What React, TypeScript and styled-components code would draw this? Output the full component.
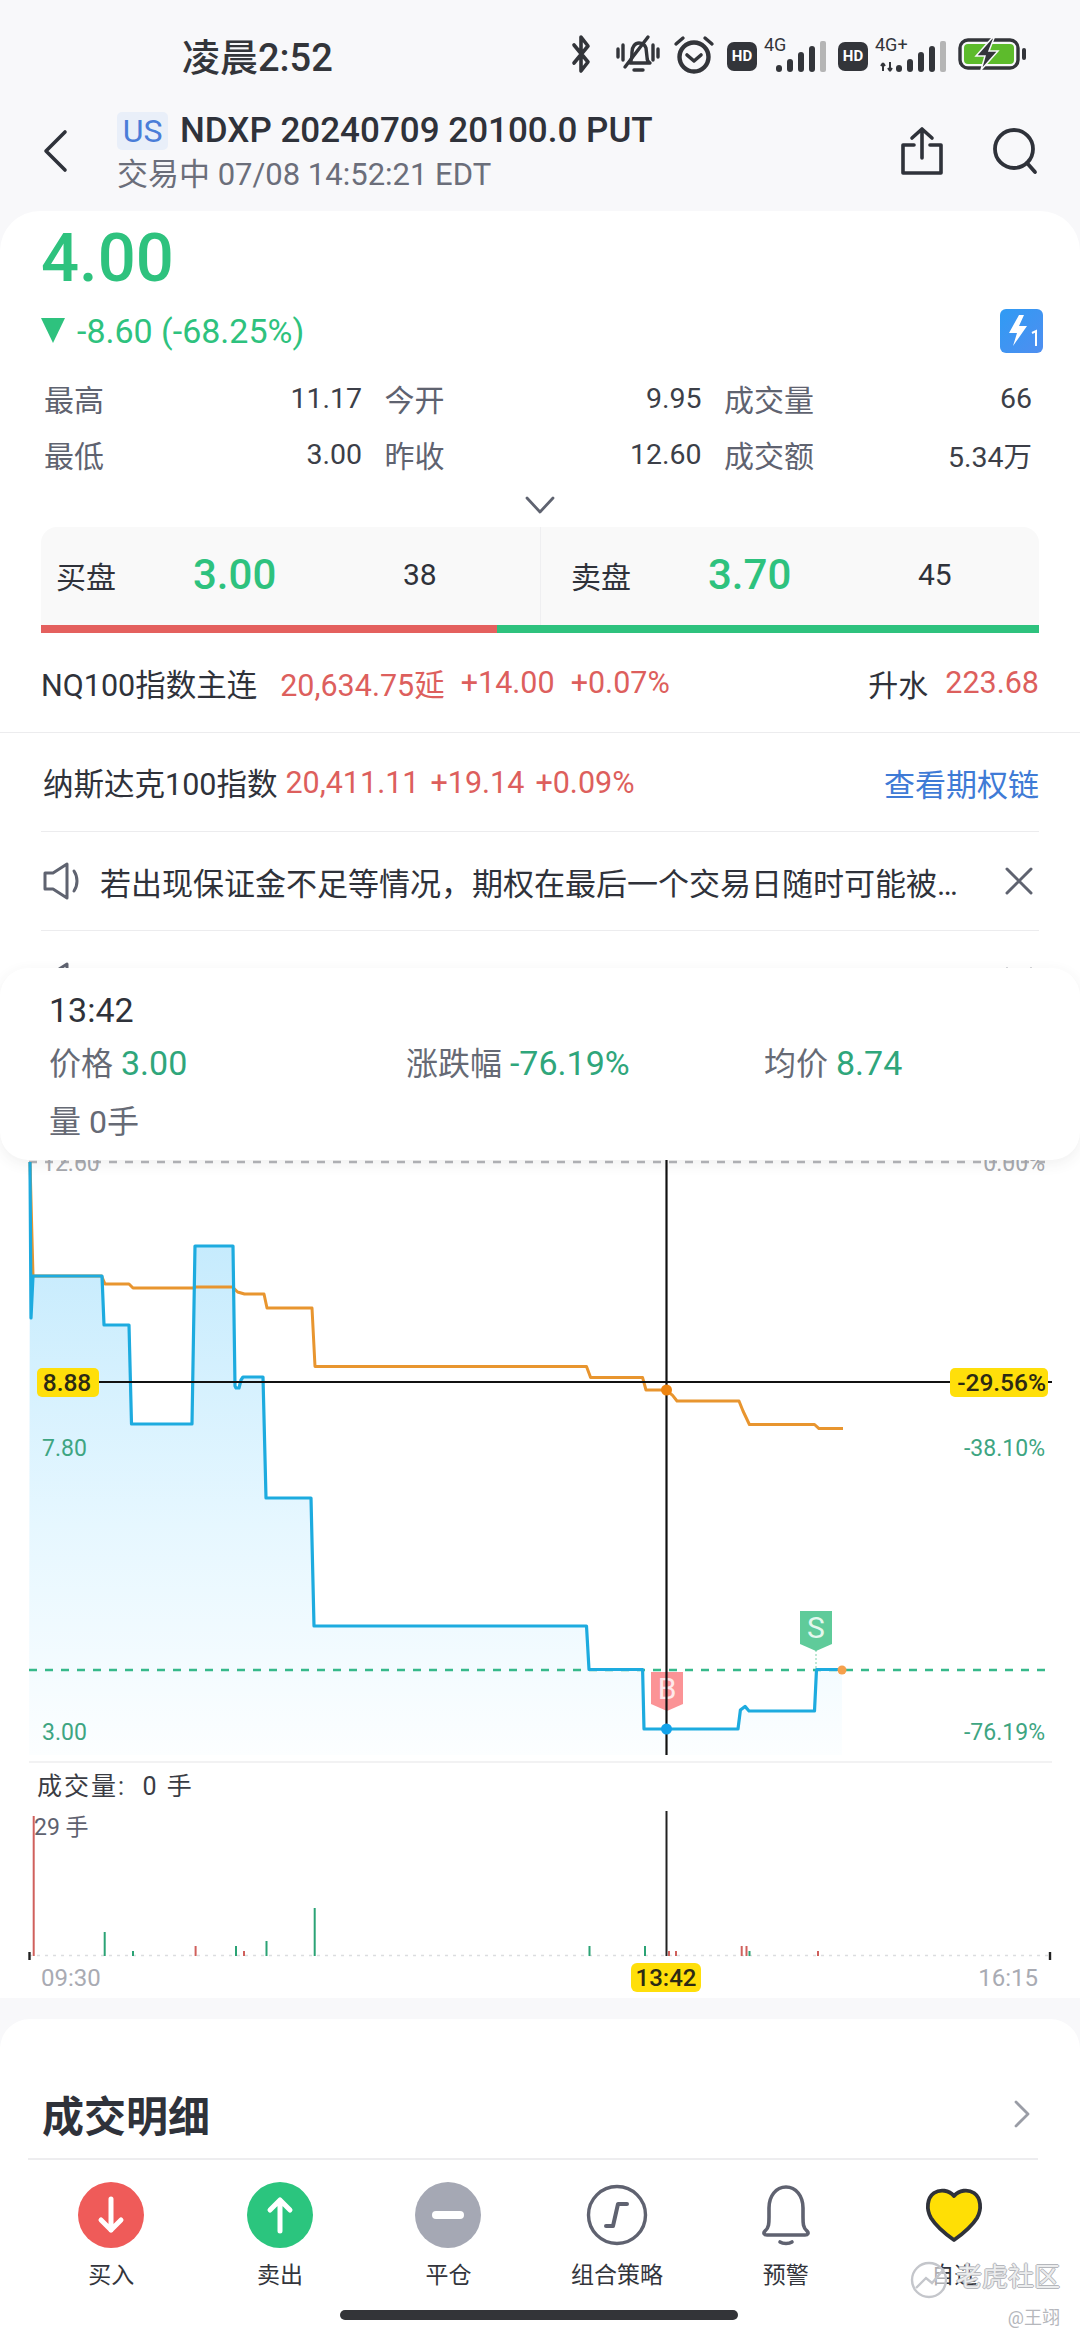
import styled, { createGlobalStyle } from 'styled-components';

const GREEN = '#2ec27e';
const RED = '#e4605e';
const INK = '#2f323a';
const GREY = '#5f6370';

const BLUE_LINE: [number, number][] = [
  [30, 1162], [31, 1318], [33, 1276], [102, 1276], [104, 1325], [129, 1325], [131.5, 1424], [192, 1424],
  [195, 1246], [233, 1246], [235, 1386], [236, 1388], [239, 1388], [241, 1380], [243, 1377], [263, 1377],
  [266, 1498], [311, 1498], [314, 1626], [586.5, 1626], [589, 1669.5], [642.6, 1669.5], [644, 1729], [738, 1729],
  [740.4, 1710], [745, 1706.4], [749, 1711], [814.5, 1711], [816.5, 1669.5], [842, 1669.5],
];

const ORANGE_LINE: [number, number][] = [
  [30, 1162], [33, 1276], [101.6, 1276], [105, 1284], [129, 1284], [133, 1288], [193, 1288], [196, 1287],
  [232.5, 1287], [237.6, 1292], [244.5, 1294], [264, 1294], [267, 1308], [312, 1308], [315, 1366.5],
  [586.5, 1366.5], [590.6, 1377.6], [642.6, 1377.6], [646, 1390], [666, 1390], [672.6, 1395.4], [677, 1401],
  [739, 1401], [743, 1411], [749.4, 1424.5], [814.5, 1424.5], [819, 1428.6], [843, 1428.6],
];

const VOLUME_BARS: { x: number; top: number; up?: boolean }[] = [
  { x: 33.7, top: 1816, up: true },
  { x: 104.7, top: 1932 },
  { x: 133, top: 1951 },
  { x: 195.6, top: 1946, up: true },
  { x: 236, top: 1946 },
  { x: 244, top: 1951, up: true },
  { x: 266.5, top: 1941 },
  { x: 314.7, top: 1908 },
  { x: 589.5, top: 1946 },
  { x: 645, top: 1946 },
  { x: 669, top: 1951, up: true },
  { x: 676, top: 1951, up: true },
  { x: 741.7, top: 1946, up: true },
  { x: 746.5, top: 1946, up: true },
  { x: 749.5, top: 1951 },
  { x: 818, top: 1951, up: true },
];

const toPoints = (line: [number, number][]) => line.map(([x, y]) => `${x},${y}`).join(' ');

const GlobalStyle = createGlobalStyle`
  html, body {
    margin: 0;
    padding: 0;
    background: #f8f8fa;
  }
  body {
    font-family: Roboto, "Noto Sans CJK SC", sans-serif;
    color: ${INK};
  }
  * {
    box-sizing: border-box;
  }
`;

const BellOffIcon = () => (
  <svg width="46" height="40" viewBox="0 0 46 40" fill="none" stroke="#33353a" strokeWidth="3.4" strokeLinecap="round" strokeLinejoin="round">
    <path d="M15 29c2-3 2-6 2-11 0-5 3-9 7-9s6 2 7 5l1 9c0 3 1 5 3 6z" />
    <path d="M10 33 33 3" />
    <path d="M3 15v8M8 11v15M38 11v15M43 15v8" />
    <path d="M19 36h9" />
  </svg>
);

const SignalIcon = ({ small }: { small?: boolean }) => (
  <svg width={small ? 66 : 50} height="32" viewBox={small ? '0 0 66 32' : '0 0 50 32'}>
    {small && <path d="M3 24v6M3 22l-2 3M3 22l2 3M10 21v9M10 30l-2-3M10 30l2-3" stroke="#33353a" strokeWidth="2" fill="none" />}
    <g fill="#33353a" transform={small ? 'translate(16 0)' : undefined}>
      <rect x="0" y="24" width="6" height="7" rx="3" />
      <rect x="11" y="18" width="6" height="13" rx="3" />
      <rect x="22" y="11" width="6" height="20" rx="3" />
      <rect x="33" y="5" width="6" height="26" rx="3" />
      <rect x="44" y="0" width="6" height="31" rx="2" fill="#b5b5b5" />
    </g>
  </svg>
);

const SpeakerIcon = () => (
  <svg width="38" height="38" viewBox="0 0 38 38" fill="none" stroke={GREY} strokeWidth="3" strokeLinejoin="round" strokeLinecap="round">
    <path d="M2 11h8L24 2v34l-14-9H2z" />
    <path d="M31 9c4 6 4 14 0 20" />
  </svg>
);

const CloseIcon = () => (
  <CloseWrap>
    <svg width="28" height="28" viewBox="0 0 28 28" fill="none" stroke={GREY} strokeWidth="3" strokeLinecap="round">
      <path d="M2 2l24 24M26 2 2 26" />
    </svg>
  </CloseWrap>
);

const App = () => (
  <>
    <GlobalStyle />
    <Page>
      <StatusBar>
        <Clock>凌晨2:52</Clock>
        <StatusIcons>
          <svg width="20" height="40" viewBox="0 0 18 40" fill="none" stroke="#33353a" strokeWidth="3.6" strokeLinejoin="round" strokeLinecap="round">
            <path d="M2 11 16 28 9 37V3l7 9L2 29" />
          </svg>
          <BellSlot>
            <BellOffIcon />
          </BellSlot>
          <svg width="42" height="40" viewBox="0 0 42 40" fill="none" stroke="#33353a" strokeLinecap="round" strokeLinejoin="round">
            <circle cx="21" cy="23" r="14.5" strokeWidth="4.4" />
            <path d="M14 21l7 6 7-6" strokeWidth="3.6" />
            <path d="M3 10 10 4M39 10l-7-6" strokeWidth="3.4" />
          </svg>
          <HdBadge>HD</HdBadge>
          <NetworkBlock $pad={12}>
            <NetworkLabel>4G</NetworkLabel>
            <SignalIcon />
          </NetworkBlock>
          <HdBadge>HD</HdBadge>
          <NetworkBlock $pad={5}>
            <NetworkLabel>4G+</NetworkLabel>
            <SignalIcon small />
          </NetworkBlock>
          <svg width="70" height="32" viewBox="0 0 70 32">
            <rect x="2" y="2" width="58" height="28" rx="8" fill="none" stroke="#33353a" strokeWidth="3.4" />
            <rect x="6" y="6" width="50" height="20" rx="4" fill="#5dbb2c" />
            <rect x="64" y="10" width="4" height="12" rx="2" fill="#33353a" />
            <path d="M34 0 18 18h9l-4 14 17-19h-9l5-13z" fill="#33353a" stroke="#f8f8fa" strokeWidth="1.5" />
          </svg>
        </StatusIcons>
      </StatusBar>

      <NavBar>
        <svg width="26" height="44" viewBox="0 0 26 44" fill="none" stroke={INK} strokeWidth="3.6" strokeLinecap="round" strokeLinejoin="round">
          <path d="M23 3 4 22l19 19" />
        </svg>
        <NavTitleBlock>
          <NavTitle>
            <MarketBadge>US</MarketBadge>
            NDXP 20240709 20100.0 PUT
          </NavTitle>
          <NavSub>交易中 07/08 14:52:21 EDT</NavSub>
        </NavTitleBlock>
        <NavActions>
          <svg width="44" height="50" viewBox="0 0 44 50" fill="none" stroke={INK} strokeWidth="3.6" strokeLinecap="round" strokeLinejoin="round">
            <path d="M14 19H3v28h38V19H30" />
            <path d="M22 32V3M12 12l10-9 10 9" />
          </svg>
          <svg width="48" height="48" viewBox="0 0 48 48" fill="none" stroke={INK} strokeWidth="3.8" strokeLinecap="round">
            <circle cx="23" cy="22" r="19" />
            <path d="M36 36l8 9" />
          </svg>
        </NavActions>
      </NavBar>

      <QuoteCard>
        <Price>4.00</Price>
        <ChangeRow>
          <DownTriangle />
          <span>-8.60 (-68.25%)</span>
          <BoltBadge>
            <svg width="43" height="44" viewBox="0 0 43 44">
              <path d="M19 6 9 24h8l-4 13 14-20h-8l5-11z" fill="#fff" />
              <path d="M32 24l4-2v15" fill="none" stroke="#fff" strokeWidth="2" />
            </svg>
          </BoltBadge>
        </ChangeRow>

        <StatsGrid>
          <Stat><StatLabel>最高</StatLabel><span>11.17</span></Stat>
          <Stat><StatLabel>今开</StatLabel><span>9.95</span></Stat>
          <Stat><StatLabel>成交量</StatLabel><span>66</span></Stat>
          <Stat><StatLabel>最低</StatLabel><span>3.00</span></Stat>
          <Stat><StatLabel>昨收</StatLabel><span>12.60</span></Stat>
          <Stat><StatLabel>成交额</StatLabel><span>5.34万</span></Stat>
        </StatsGrid>

        <ExpandRow>
          <svg width="30" height="18" viewBox="0 0 30 18" fill="none" stroke={GREY} strokeWidth="2.8" strokeLinecap="round" strokeLinejoin="round">
            <path d="M2 2l13 14L28 2" />
          </svg>
        </ExpandRow>

        <BidAsk>
          <BidAskSides>
            <BidAskSide $pad={15}>
              <span>买盘</span>
              <BidPrice>3.00</BidPrice>
              <span>38</span>
            </BidAskSide>
            <BidAskSide $pad={30} $divided>
              <span>卖盘</span>
              <BidPrice>3.70</BidPrice>
              <span>45</span>
            </BidAskSide>
          </BidAskSides>
          <RatioBar>
            <RatioPart $color={RED} $size={456} />
            <RatioPart $color={GREEN} $size={542} />
          </RatioBar>
        </BidAsk>

        <FutureRow>
          <span>NQ100指数主连</span>
          <RedText $left={23}>20,634.75延</RedText>
          <RedText $left={16}>+14.00</RedText>
          <RedText $left={16}>+0.07%</RedText>
          <PushRight>升水</PushRight>
          <RedText $left={17}>223.68</RedText>
        </FutureRow>
      </QuoteCard>

      <IndexBlock>
        <IndexRow>
          <span>纳斯达克100指数</span>
          <RedText $left={8}>20,411.11</RedText>
          <RedText $left={11}>+19.14</RedText>
          <RedText $left={11}>+0.09%</RedText>
          <LinkText>查看期权链</LinkText>
        </IndexRow>
        <NoticeRow>
          <SpeakerIcon />
          <NoticeText>若出现保证金不足等情况，期权在最后一个交易日随时可能被强制平仓处理</NoticeText>
          <CloseIcon />
        </NoticeRow>
        <NoticeRow $last>
          <SpeakerIcon />
          <NoticeText>注意，根据交易所规定，NDXP 到期时将报单，价外作废，若持仓不足请留意</NoticeText>
          <CloseIcon />
        </NoticeRow>
      </IndexBlock>

      <ChartSection>
        <Tooltip>
          <TooltipTime>13:42</TooltipTime>
          <TooltipRow>
            <TooltipCell $width={357}>价格 <em>3.00</em></TooltipCell>
            <TooltipCell $width={358}>涨跌幅 <em>-76.19%</em></TooltipCell>
            <TooltipCell>均价 <em>8.74</em></TooltipCell>
          </TooltipRow>
          <TooltipCell>量 0手</TooltipCell>
        </Tooltip>

        <ChartSvg width="1080" height="967" viewBox="0 1031 1080 967">
          <defs>
            <linearGradient id="area" gradientUnits="userSpaceOnUse" x1="0" y1="1246" x2="0" y2="1755">
              <stop offset="0" stopColor="#c6ebfd" />
              <stop offset="0.55" stopColor="#e6f7ff" />
              <stop offset="1" stopColor="#fcfeff" />
            </linearGradient>
          </defs>

          <polygon points={`29,1755 ${toPoints(BLUE_LINE)} 842,1755`} fill="url(#area)" />
          <line x1="29" y1="1162" x2="1045" y2="1162" stroke="#b4b5b9" strokeWidth="2.4" strokeDasharray="8 8" />
          <line x1="29" y1="1670" x2="1045" y2="1670" stroke="#36b98a" strokeWidth="2.4" strokeDasharray="8 8" />

          <AxisText x="42" y="1171" fill="#a6a8ae">12.60</AxisText>
          <AxisText x="1045" y="1171" fill="#a6a8ae" textAnchor="end">0.00%</AxisText>
          <AxisText x="42" y="1456" fill="#3ea582">7.80</AxisText>
          <AxisText x="1045" y="1456" fill="#3ea582" textAnchor="end">-38.10%</AxisText>
          <AxisText x="42" y="1740" fill="#3ea582">3.00</AxisText>
          <AxisText x="1045" y="1740" fill="#3ea582" textAnchor="end">-76.19%</AxisText>

          <polyline points={toPoints(ORANGE_LINE)} fill="none" stroke="#e8952f" strokeWidth="3" strokeLinejoin="round" />
          <polyline points={toPoints(BLUE_LINE)} fill="none" stroke="#1dabdf" strokeWidth="3.2" strokeLinejoin="round" />

          <path d="M651 1672h32v32l-16 7-16-7z" fill="#fb9396" />
          <MarkerText x="667" y="1699" fill="#ffe9ea">B</MarkerText>
          <line x1="816" y1="1650" x2="816" y2="1668" stroke="#bfe8d5" strokeWidth="2" strokeDasharray="2 2" />
          <path d="M800 1611h32v33l-16 7-16-7z" fill="#5fcb9a" />
          <MarkerText x="816" y="1638" fill="#e4f8ee">S</MarkerText>

          <line x1="99" y1="1382" x2="1052" y2="1382" stroke="#111" strokeWidth="2.2" />
          <line x1="666.5" y1="1160" x2="666.5" y2="1755" stroke="#111" strokeWidth="2.2" />
          <circle cx="666.5" cy="1390" r="5.5" fill="#ee8410" />
          <circle cx="666.5" cy="1729" r="5.5" fill="#13a3ea" />
          <circle cx="842" cy="1670" r="4.5" fill="#f5a04c" />

          <rect x="37" y="1368" width="62" height="29" rx="5" fill="#ffdf0a" />
          <PriceTag x="67" y="1391" textAnchor="middle">8.88</PriceTag>
          <rect x="950" y="1368" width="98" height="29" rx="5" fill="#ffdf0a" />
          <PriceTag x="1046" y="1391" textAnchor="end">-29.56%</PriceTag>

          <line x1="29" y1="1762" x2="1052" y2="1762" stroke="#eeeeef" strokeWidth="1.5" />
          <VolumeTitle x="37" y="1795" xmlSpace="preserve">成交量:  0 手</VolumeTitle>

          <line x1="29" y1="1955.5" x2="1050" y2="1955.5" stroke="#dcdde0" strokeWidth="1.4" strokeDasharray="3 5" />
          {VOLUME_BARS.map(({ x, top, up }) => (
            <line key={x} x1={x} y1={top} x2={x} y2="1956" stroke={up ? '#d0605c' : '#2ba375'} strokeWidth="2" />
          ))}
          <line x1="666.5" y1="1811" x2="666.5" y2="1956" stroke="#222" strokeWidth="2" />
          <line x1="29.5" y1="1952" x2="29.5" y2="1960" stroke="#222" strokeWidth="2.4" />
          <line x1="1050" y1="1952" x2="1050" y2="1960" stroke="#222" strokeWidth="2.4" />
          <VolumeScale x="34" y="1835">29 手</VolumeScale>

          <TimeText x="41" y="1986">09:30</TimeText>
          <TimeText x="1038" y="1986" textAnchor="end">16:15</TimeText>
          <rect x="631" y="1963" width="70" height="29" rx="6" fill="#ffdf0a" />
          <TimeTag x="666" y="1986" textAnchor="middle">13:42</TimeTag>
        </ChartSvg>
      </ChartSection>

      <DetailCard>
        <DetailTitle>成交明细</DetailTitle>
        <svg width="16" height="28" viewBox="0 0 16 28" fill="none" stroke="#9a9da6" strokeWidth="2.8" strokeLinecap="round" strokeLinejoin="round">
          <path d="M2 2l12 12L2 26" />
        </svg>
      </DetailCard>

      <TabBar>
        <Tab>
          <RoundIcon $color="#ef5b59">
            <svg width="28" height="38" viewBox="0 0 28 38" fill="none" stroke="#fff" strokeWidth="5" strokeLinecap="round" strokeLinejoin="round">
              <path d="M14 3v31M4 24l10 10 10-10" />
            </svg>
          </RoundIcon>
          <TabLabel>买入</TabLabel>
        </Tab>
        <Tab>
          <RoundIcon $color="#2bc57e">
            <svg width="28" height="38" viewBox="0 0 28 38" fill="none" stroke="#fff" strokeWidth="5" strokeLinecap="round" strokeLinejoin="round">
              <path d="M14 35V4M4 14 14 4l10 10" />
            </svg>
          </RoundIcon>
          <TabLabel>卖出</TabLabel>
        </Tab>
        <Tab>
          <RoundIcon $color="#a5a8b4">
            <svg width="32" height="10" viewBox="0 0 32 10">
              <rect width="32" height="8" y="1" rx="4" fill="#fff" />
            </svg>
          </RoundIcon>
          <TabLabel>平仓</TabLabel>
        </Tab>
        <Tab>
          <IconSlot>
            <svg width="62" height="62" viewBox="0 0 62 62" fill="none" stroke="#5f6270" strokeLinecap="round" strokeLinejoin="round">
              <circle cx="31" cy="31" r="28.5" strokeWidth="3.4" />
              <path d="M20 42h7l5-22h9" strokeWidth="4" />
            </svg>
          </IconSlot>
          <TabLabel>组合策略</TabLabel>
        </Tab>
        <Tab>
          <IconSlot>
            <svg width="54" height="62" viewBox="0 0 54 62" fill="none" stroke="#5f6270" strokeWidth="3.6" strokeLinecap="round" strokeLinejoin="round">
              <path d="M6 47c4-3 4-8 4-14V24C10 12 17 3 27 3s17 9 17 21v9c0 6 0 11 4 14 2 2 1 4-2 4H8c-3 0-4-2-2-4z" />
              <path d="M21 58c3 2 9 2 12 0" />
            </svg>
          </IconSlot>
          <TabLabel>预警</TabLabel>
        </Tab>
        <Tab>
          <IconSlot>
            <svg width="60" height="56" viewBox="0 0 60 56">
              <path d="M30 9C25 3 16 2 10 6 3 11 2 22 7 31c5 8 13 15 23 22 10-7 18-14 23-22 5-9 4-20-3-25-6-4-15-3-20 3z" fill="#ffdf05" stroke="#2f323a" strokeWidth="3.8" strokeLinejoin="round" />
            </svg>
          </IconSlot>
          <TabLabel>自选</TabLabel>
        </Tab>
        <HomeBar />
        <Watermark>
          <WatermarkMain>
            <svg width="46" height="46" viewBox="0 0 46 46" fill="none" stroke="#c4c6cb" strokeWidth="2.4">
              <circle cx="21" cy="26" r="17" fill="rgba(255,255,255,.6)" />
              <path d="M8 34 18 24l6 5 12-14" />
            </svg>
            <WatermarkText>老虎社区</WatermarkText>
          </WatermarkMain>
          <WatermarkUser>@王翊</WatermarkUser>
        </Watermark>
      </TabBar>
    </Page>
  </>
);

const Page = styled.div`
  position: relative;
  width: 1080px;
  height: 2340px;
  overflow: hidden;
  display: flex;
  flex-direction: column;
  background: #f8f8fa;
`;

const StatusBar = styled.div`
  height: 90px;
  padding: 18px 52px 0 182px;
  display: flex;
  align-items: center;
  justify-content: space-between;
`;

const Clock = styled.span`
  font-size: 38px;
  font-weight: 500;
  color: #33353a;
`;

const StatusIcons = styled.div`
  display: flex;
  align-items: center;
  gap: 12px;
`;

const BellSlot = styled.span`
  display: flex;
  margin-left: 12px;
`;

const HdBadge = styled.span`
  width: 30px;
  height: 29px;
  margin-right: -5px;
  border-radius: 7px;
  background: #33353a;
  color: #fff;
  font-size: 15px;
  font-weight: 700;
  display: flex;
  align-items: center;
  justify-content: center;
  margin-top: 4px;
`;

const NetworkBlock = styled.div<{ $pad: number }>`
  position: relative;
  display: flex;
  align-items: flex-end;
  height: 38px;
  padding-left: ${(p) => p.$pad}px;
`;

const NetworkLabel = styled.span`
  position: absolute;
  left: 0;
  top: -1px;
  font-size: 18px;
  color: #33353a;
`;

const NavBar = styled.div`
  height: 121px;
  padding: 0 41px 0 42px;
  display: flex;
  align-items: center;
`;

const NavTitleBlock = styled.div`
  margin-left: 49px;
  margin-top: 4px;
  display: flex;
  flex-direction: column;
  gap: 7px;
`;

const NavTitle = styled.div`
  display: flex;
  align-items: center;
  font-size: 35px;
  font-weight: 500;
  line-height: 38px;
`;

const MarketBadge = styled.span`
  width: 51px;
  height: 38px;
  margin-right: 12px;
  border-radius: 5px;
  background: #e9eff9;
  color: #4a7dd8;
  font-size: 32px;
  font-weight: 400;
  text-align: center;
`;

const NavSub = styled.div`
  font-size: 31px;
  line-height: 36px;
  color: #6b6e7a;
`;

const NavActions = styled.div`
  margin-left: auto;
  display: flex;
  align-items: center;
  gap: 47px;
`;

const QuoteCard = styled.div`
  padding: 7px 41px 0;
  background: #fff;
  border-radius: 40px 40px 0 0;
`;

const Price = styled.div`
  font-size: 67px;
  line-height: 80px;
  font-weight: 500;
  color: ${GREEN};
`;

const ChangeRow = styled.div`
  height: 65px;
  display: flex;
  align-items: center;
  gap: 12px;
  font-size: 34px;
  color: ${GREEN};
`;

const DownTriangle = styled.span`
  width: 0;
  height: 0;
  border-left: 12px solid transparent;
  border-right: 12px solid transparent;
  border-top: 25px solid ${GREEN};
`;

const BoltBadge = styled.span`
  margin-left: auto;
  margin-right: -4px;
  width: 43px;
  height: 44px;
  display: flex;
  border-radius: 6px;
  background: linear-gradient(135deg, #2f9bf4, #4f8ef0);
`;

const StatsGrid = styled.div`
  margin: 7px 7px 0 3px;
  display: grid;
  grid-template-columns: 318px 317px 308px;
  column-gap: 22.5px;
  grid-auto-rows: 56px;
  font-size: 28.5px;
  color: #3c3f48;
`;

const Stat = styled.div`
  display: flex;
  align-items: center;
  justify-content: space-between;
`;

const StatLabel = styled.span`
  font-size: 30px;
  color: ${GREY};
`;

const ExpandRow = styled.div`
  height: 45px;
  display: flex;
  align-items: center;
  justify-content: center;
`;

const BidAsk = styled.div`
  height: 106px;
  display: flex;
  flex-direction: column;
  border-radius: 16px 16px 0 0;
  background: #f9f9f9;
`;

const BidAskSides = styled.div`
  flex: 1;
  display: flex;
`;

const BidAskSide = styled.div<{ $pad: number; $divided?: boolean }>`
  width: 50%;
  padding: 0 0 3px ${(p) => p.$pad}px;
  display: grid;
  grid-template-columns: 137px 210px auto;
  align-items: center;
  font-size: 30px;
  color: ${INK};
  border-left: ${(p) => (p.$divided ? '1px solid #efeff1' : 'none')};
`;

const BidPrice = styled.span`
  font-size: 42px;
  font-weight: 500;
  color: ${GREEN};
`;

const RatioBar = styled.div`
  height: 8px;
  display: flex;
`;

const RatioPart = styled.span<{ $color: string; $size: number }>`
  flex: ${(p) => p.$size};
  background: ${(p) => p.$color};
`;

const FutureRow = styled.div`
  height: 99px;
  display: flex;
  align-items: center;
  font-size: 30.5px;
  white-space: nowrap;
`;

const RedText = styled.span<{ $left: number }>`
  margin-left: ${(p) => p.$left}px;
  color: #dd5f5d;
`;

const PushRight = styled.span`
  margin-left: auto;
  font-size: 30px;
`;

const IndexBlock = styled.div`
  background: #fff;
  border-top: 1px solid #ececee;
  padding: 0 41px;
`;

const IndexRow = styled.div`
  height: 99px;
  display: flex;
  align-items: center;
  padding-left: 2px;
  font-size: 30.5px;
  white-space: nowrap;
  border-bottom: 1px solid #ececee;
`;

const LinkText = styled.span`
  margin-left: auto;
  font-size: 31px;
  color: #3f7bd6;
`;

const NoticeRow = styled.div<{ $last?: boolean }>`
  height: ${(p) => (p.$last ? 100 : 99)}px;
  display: flex;
  align-items: center;
  padding-left: 2px;
  gap: 19px;
  font-size: 31px;
  border-bottom: ${(p) => (p.$last ? 'none' : '1px solid #ececee')};
`;

const NoticeText = styled.span`
  width: 858px;
  overflow: hidden;
  white-space: nowrap;
  text-overflow: ellipsis;
`;

const CloseWrap = styled.span`
  display: flex;
  margin-left: 28px;
`;

const ChartSection = styled.div`
  position: relative;
  height: 967px;
  background: #fff;
`;

const ChartSvg = styled.svg`
  display: block;
  font-family: Roboto, "Noto Sans CJK SC", sans-serif;
`;

const AxisText = styled.text`
  font-size: 23px;
`;

const MarkerText = styled.text`
  font-size: 30px;
  text-anchor: middle;
`;

const PriceTag = styled.text`
  font-size: 24.5px;
  font-weight: 500;
  fill: #2c2a14;
`;

const VolumeTitle = styled.text`
  font-size: 25px;
  letter-spacing: 2px;
  fill: #3a3c44;
  white-space: pre;
`;

const VolumeScale = styled.text`
  font-size: 23px;
  fill: #5f6270;
`;

const TimeText = styled.text`
  font-size: 24px;
  fill: #a9abb3;
`;

const TimeTag = styled.text`
  font-size: 24px;
  font-weight: 500;
  fill: #2c2a14;
`;

const Tooltip = styled.div`
  position: absolute;
  z-index: 2;
  left: 0;
  right: 0;
  top: -63px;
  height: 192px;
  padding: 18px 49px 0;
  background: #fff;
  border-radius: 28px;
  box-shadow: 0 4px 14px rgba(60, 60, 70, 0.08);
  display: flex;
  flex-direction: column;
`;

const TooltipTime = styled.div`
  font-size: 34px;
  line-height: 48px;
`;

const TooltipRow = styled.div`
  display: flex;
  height: 59px;
`;

const TooltipCell = styled.div<{ $width?: number }>`
  width: ${(p) => (p.$width ? `${p.$width}px` : 'auto')};
  font-size: 32px;
  line-height: 59px;
  color: #666a75;

  em {
    font-style: normal;
    font-size: 34px;
    color: #2fa67b;
  }
`;

const DetailCard = styled.div`
  margin-top: 21px;
  height: 139px;
  padding: 50px 50px 0 42px;
  display: flex;
  align-items: center;
  justify-content: space-between;
  background: #fff;
  border-radius: 30px 30px 0 0;
`;

const DetailTitle = styled.span`
  font-size: 42px;
  font-weight: 600;
`;

const TabBar = styled.div`
  position: relative;
  flex: 1;
  padding: 24px 0 0 27px;
  display: grid;
  grid-template-columns: repeat(6, 168.6px);
  align-items: start;
  background: #fff;

  &::before {
    content: '';
    position: absolute;
    top: 0;
    left: 28px;
    width: 1010px;
    height: 2px;
    background: #ededef;
  }
`;

const Tab = styled.div`
  display: flex;
  flex-direction: column;
  align-items: center;
`;

const RoundIcon = styled.span<{ $color: string }>`
  width: 66px;
  height: 66px;
  border-radius: 50%;
  background: ${(p) => p.$color};
  display: flex;
  align-items: center;
  justify-content: center;
`;

const IconSlot = styled.span`
  width: 66px;
  height: 66px;
  display: flex;
  align-items: center;
  justify-content: center;
`;

const TabLabel = styled.span`
  margin-top: 6px;
  font-size: 23px;
  line-height: 44px;
  color: #33353c;
`;

const HomeBar = styled.span`
  position: absolute;
  left: 340px;
  top: 152px;
  width: 398px;
  height: 10px;
  border-radius: 5px;
  background: #333438;
`;

const Watermark = styled.div`
  position: absolute;
  right: 20px;
  top: 96px;
  display: flex;
  flex-direction: column;
  align-items: flex-end;
  gap: 6px;
`;

const WatermarkMain = styled.div`
  display: flex;
  align-items: center;
  gap: 2px;
`;

const WatermarkText = styled.span`
  font-size: 26px;
  line-height: 44px;
  color: rgba(255, 255, 255, 0.75);
  text-shadow: 1px 0 #b5b7bc, -1px 0 #b5b7bc, 0 1px #b5b7bc, 0 -1px #b5b7bc;
`;

const WatermarkUser = styled.span`
  font-size: 18px;
  line-height: 24px;
  color: #b5b7bc;
`;

export default App;
